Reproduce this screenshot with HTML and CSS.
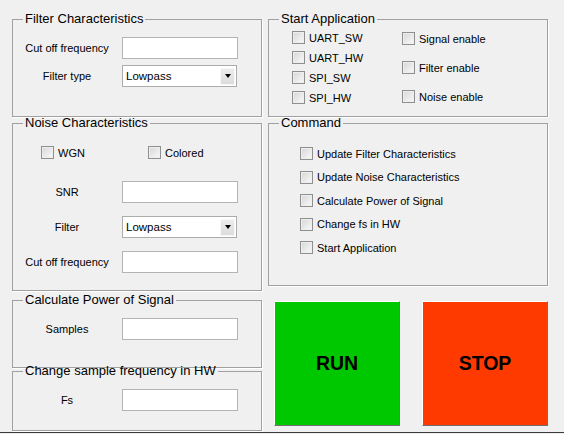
FILE: index.html
```html
<!DOCTYPE html>
<html>
<head>
    <title>Signal Filter Control</title>
    <link rel="stylesheet" href="styles.css">
</head>
<body>

<div class="window">
    <div class="column left-column">
        <fieldset class="panel filter-panel">
            <legend>Filter Characteristics</legend>
            <div class="form">
                <label>Cut off frequency</label>
                <input class="field" type="text">
                <label>Filter type</label>
                <div class="dropdown"><span>Lowpass</span><span class="arrow"></span></div>
            </div>
        </fieldset>

        <fieldset class="panel noise-panel">
            <legend>Noise Characteristics</legend>
            <div class="noise-types">
                <label class="check wgn"><input type="checkbox"> WGN</label>
                <label class="check"><input type="checkbox"> Colored</label>
            </div>
            <div class="form noise-form">
                <label>SNR</label>
                <input class="field" type="text">
                <label>Filter</label>
                <div class="dropdown"><span>Lowpass</span><span class="arrow"></span></div>
                <label>Cut off frequency</label>
                <input class="field" type="text">
            </div>
        </fieldset>

        <fieldset class="panel power-panel">
            <legend>Calculate Power of Signal</legend>
            <div class="form">
                <label>Samples</label>
                <input class="field" type="text">
            </div>
        </fieldset>

        <fieldset class="panel rate-panel">
            <legend>Change sample frequency in HW</legend>
            <div class="form">
                <label>Fs</label>
                <input class="field" type="text">
            </div>
        </fieldset>
    </div>

    <div class="column right-column">
        <fieldset class="panel start-panel">
            <legend>Start Application</legend>
            <div class="start-grid">
                <div class="check-list interfaces">
                    <label class="check"><input type="checkbox"> UART_SW</label>
                    <label class="check"><input type="checkbox"> UART_HW</label>
                    <label class="check"><input type="checkbox"> SPI_SW</label>
                    <label class="check"><input type="checkbox"> SPI_HW</label>
                </div>
                <div class="check-list enables">
                    <label class="check"><input type="checkbox"> Signal enable</label>
                    <label class="check"><input type="checkbox"> Filter enable</label>
                    <label class="check"><input type="checkbox"> Noise enable</label>
                </div>
            </div>
        </fieldset>

        <fieldset class="panel command-panel">
            <legend>Command</legend>
            <div class="check-list commands">
                <label class="check"><input type="checkbox"> Update Filter Characteristics</label>
                <label class="check"><input type="checkbox"> Update Noise Characteristics</label>
                <label class="check"><input type="checkbox"> Calculate Power of Signal</label>
                <label class="check"><input type="checkbox"> Change fs in HW</label>
                <label class="check"><input type="checkbox"> Start Application</label>
            </div>
        </fieldset>

        <div class="actions">
            <button class="big-button run-button">RUN</button>
            <button class="big-button stop-button">STOP</button>
        </div>
    </div>
</div>
<div class="window-edge"></div>

</body>
</html>
```

FILE: styles.css
```css
body {
    margin: 0;
    background-color: #f0f0f0;
    font-family: "Liberation Sans", Arial, sans-serif;
    font-size: 11px;
    color: #000;
    height: 434px;
    overflow: hidden;
}
.window {
    display: flex;
    gap: 6px;
    height: 432px;
    box-sizing: border-box;
    padding: 14px 0 0 12px;
}
.column {
    display: flex;
    flex-direction: column;
}
.left-column {
    width: 250px;
}
.right-column {
    width: 280px;
}

/* group boxes */
.panel {
    margin: 0;
    padding: 0;
    min-width: 0;
    box-sizing: border-box;
    border: 1px solid #a0a0a0;
    box-shadow: 1px 1px 0 #fff;
}
.panel legend {
    font-size: 13px;
    line-height: 9px;
    padding: 0 2px 2px 2px;
    margin-left: 10px;
}
.filter-panel { height: 103px; }
.noise-panel { height: 173px; margin-top: 1px; }
.power-panel { height: 73px; margin-top: 4px; }
.rate-panel { height: 65px; margin-top: -2px; }
.start-panel { height: 103px; }
.command-panel { height: 168px; margin-top: 1px; }

/* label + field rows */
.form {
    display: grid;
    grid-template-columns: 86px 116px;
    column-gap: 12px;
    row-gap: 6px;
    align-items: center;
    padding: 12px 0 0 11px;
}
.form label {
    text-align: center;
}
.noise-form {
    row-gap: 13px;
    padding-top: 22px;
}
.field {
    height: 22px;
    box-sizing: border-box;
    margin: 0;
    border: 1px solid #b4b4b4;
    background: #fff;
}
.dropdown {
    width: 115px;
    height: 22px;
    box-sizing: border-box;
    border: 1px solid #acacac;
    background: #fff;
    display: flex;
    align-items: center;
    justify-content: space-between;
    padding: 0 1px 0 3px;
    font-size: 11.5px;
}
.arrow {
    width: 15px;
    height: 17px;
    box-sizing: border-box;
    border: 1px solid #f8f8f8;
    background: linear-gradient(#ececec, #dcdcdc);
    display: flex;
    align-items: center;
    justify-content: center;
}
.arrow::after {
    content: "";
    border-left: 3px solid transparent;
    border-right: 3px solid transparent;
    border-top: 4px solid #000;
}

/* check boxes */
.check {
    display: flex;
    align-items: center;
    gap: 4px;
    height: 13px;
    white-space: nowrap;
}
.check input {
    appearance: none;
    width: 13px;
    height: 13px;
    margin: 0;
    box-sizing: border-box;
    border: 1px solid #8e8f8f;
    background: linear-gradient(135deg, #d6d6d6, #fafafa);
    box-shadow: inset 0 0 0 1px #eeeeee;
}
.noise-types {
    display: flex;
    padding: 17px 0 0 28px;
}
.wgn {
    width: 107px;
}
.start-grid {
    display: flex;
    padding: 6px 0 0 23px;
}
.check-list {
    display: flex;
    flex-direction: column;
}
.interfaces {
    width: 110px;
    gap: 7px;
}
.enables {
    margin-top: 1px;
    gap: 16px;
}
.commands {
    gap: 10.5px;
    padding: 18px 0 0 31px;
}

/* run / stop */
.actions {
    display: flex;
    gap: 22px;
    margin-top: 15px;
    padding-left: 6px;
}
.big-button {
    width: 126px;
    height: 125px;
    box-sizing: border-box;
    border-style: solid;
    border-width: 1px;
    border-color: #fff #707070 #707070 #fff;
    font-family: "Liberation Sans", Arial, sans-serif;
    font-weight: bold;
    font-size: 19.5px;
    color: #000;
    cursor: pointer;
}
.run-button {
    background-color: #00c800;
}
.stop-button {
    background-color: #ff3a00;
}

.window-edge {
    height: 1px;
    background-color: #3c3c3c;
}
```
